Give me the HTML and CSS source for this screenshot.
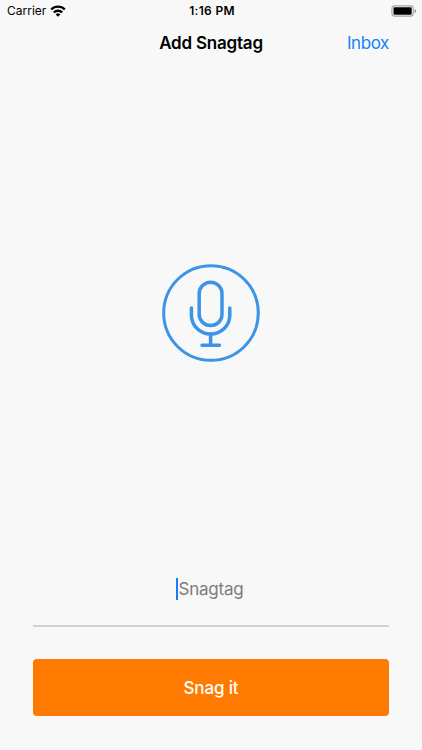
FILE: index.html
```html
<!DOCTYPE html>
<html lang="en">
<head>
  <meta charset="UTF-8" />
  <meta name="viewport" content="width=device-width, initial-scale=1.0" />
  <title>Add Snagtag</title>
  <link rel="stylesheet" href="styles.css">
</head>
<body>
  <div class="screen">
    <div class="status-bar">
      <div class="carrier">
        <span class="carrier-name">Carrier</span>
        <svg class="wifi" width="16" height="12" viewBox="0 0 16 12" fill="none" stroke="#000" stroke-width="2.3">
          <path d="M1.2 4.5a9.6 9.6 0 0 1 13.6 0" />
          <path d="M3.8 7.5a5.9 5.9 0 0 1 8.4 0" />
          <path d="M8 11.8L5.7 9.4a3.3 3.3 0 0 1 4.6 0z" fill="#000" stroke="none" />
        </svg>
      </div>
      <span class="time">1:16 PM</span>
      <svg class="battery" width="26" height="12" viewBox="0 0 26 12">
        <rect x="0.9" y="0.9" width="21.4" height="10.2" rx="2.8" fill="none" stroke="#a3a3a3" stroke-width="1.1" />
        <rect x="2.5" y="2.3" width="18.2" height="7.4" rx="1.3" fill="#000" />
        <path d="M23.7 4.1q1.4.5 1.4 1.9t-1.4 1.9z" fill="#8a8a8a" />
      </svg>
    </div>

    <div class="nav-bar">
      <h1>Add Snagtag</h1>
      <a class="inbox-link" href="#">Inbox</a>
    </div>

    <div class="record-area">
      <button class="mic-button" aria-label="Record">
        <svg width="98" height="98" viewBox="0 0 98 98" fill="none" stroke="#3c94e8" stroke-width="3.5" stroke-linecap="round">
          <circle cx="49" cy="49" r="47.3" stroke-width="3" />
          <rect x="37.2" y="18.2" width="22.8" height="43.4" rx="11.4" />
          <path d="M29.4 44v6.9a19.2 19.2 0 0 0 38.4 0v-6.9" />
          <path d="M48.6 70v11M40 81.2h17.4" />
        </svg>
      </button>
    </div>

    <div class="tag-field">
      <span class="caret"></span>
      <span class="placeholder">Snagtag</span>
    </div>

    <button class="snag-button">Snag it</button>
  </div>
</body>
</html>
```
FILE: styles.css
```css
* {
  margin: 0;
  padding: 0;
  box-sizing: border-box;
}

body {
  font-family: Inter, 'Liberation Sans', sans-serif;
  background: #f8f8f8;
  color: #000;
}

button {
  border: none;
  background: none;
  font-family: inherit;
  cursor: pointer;
}

svg {
  display: block;
}

.screen {
  height: 750px;
  display: flex;
  flex-direction: column;
}

.status-bar {
  height: 21px;
  padding: 0 5px 0 7px;
  display: grid;
  grid-template-columns: 1fr auto 1fr;
  align-items: center;
  font-size: 12px;
}

.carrier {
  display: flex;
  align-items: center;
  gap: 4px;
}

.carrier-name {
  font-size: 12px;
}

.time {
  font-weight: 600;
  letter-spacing: 0.3px;
}

.battery {
  justify-self: end;
}

.nav-bar {
  height: 44px;
  padding: 0 33px;
  display: grid;
  grid-template-columns: 1fr auto 1fr;
  align-items: center;
}

.nav-bar h1 {
  grid-column: 2;
  font-size: 17px;
  font-weight: 600;
  letter-spacing: -0.2px;
}

.inbox-link {
  justify-self: end;
  font-size: 17px;
  letter-spacing: -0.4px;
  color: #1a80f5;
  text-decoration: none;
}

.record-area {
  flex: 1;
  display: flex;
  align-items: center;
  justify-content: center;
}

.tag-field {
  height: 66px;
  margin: 0 33px;
  padding: 0 2px 9px 0;
  border-bottom: 2px solid #d0d0d2;
  display: flex;
  align-items: center;
  justify-content: center;
  font-size: 17px;
}

.caret {
  width: 2px;
  height: 22px;
  background: #1a7af8;
}

.placeholder {
  color: #7c7c7c;
  letter-spacing: -0.2px;
}

.snag-button {
  height: 57px;
  margin: 32px 33px 34px;
  border-radius: 4px;
  background: #ff7a00;
  color: #fff;
  font-size: 17px;
  font-weight: 500;
  letter-spacing: -0.15px;
}
```
